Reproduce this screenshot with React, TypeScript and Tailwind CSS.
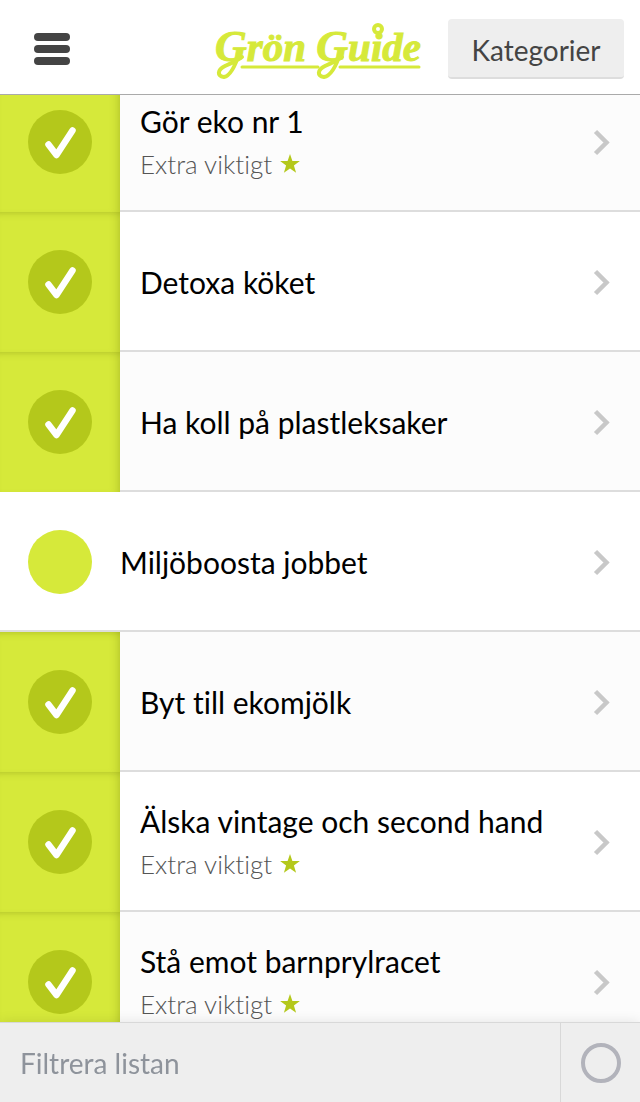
import { useState } from "react";

const initialTips = [
  { id: 1, title: "Gör eko nr 1", important: true, done: true },
  { id: 2, title: "Detoxa köket", important: false, done: true },
  { id: 3, title: "Ha koll på plastleksaker", important: false, done: true },
  { id: 4, title: "Miljöboosta jobbet", important: false, done: false },
  { id: 5, title: "Byt till ekomjölk", important: false, done: true },
  { id: 6, title: "Älska vintage och second hand", important: true, done: true },
  { id: 7, title: "Stå emot barnprylracet", important: true, done: true },
];

function Logo() {
  return (
    <svg
      width="212"
      height="64"
      viewBox="0 0 212 64"
      fill="none"
      stroke="#d6e93a"
      strokeLinecap="round"
      role="img"
      aria-label="Grön Guide"
    >
      <text
        x="3"
        y="42"
        fill="#d6e93a"
        strokeWidth="1"
        className="font-['Liberation_Serif',serif] text-[41px] font-bold italic"
      >
        <tspan className="text-[44px]">G</tspan>rön <tspan className="text-[44px]">G</tspan>uide
      </text>
      {/* Swashes below both capitals */}
      <path d="M28 32C24 45 19 57 12 58C5 57 5 51 13 47C19 44 25 42 30 38" strokeWidth="4" />
      <path d="M129 32C125 45 119 57 112 58C105 57 105 51 113 47C119 44 125 42 130 38" strokeWidth="4" />
      <path d="M30 48H106M128 48H207" strokeWidth="3" />
      <circle cx="166" cy="10" r="4" fill="#fff" strokeWidth="4" />
    </svg>
  );
}

function Header() {
  return (
    <header className="flex h-[95px] shrink-0 items-center border-b border-[#aaa] bg-white pr-4 pl-[34px]">
      <button type="button" aria-label="Meny" className="flex w-9 flex-col gap-1 pt-1">
        <span className="h-2 w-full rounded-full bg-[#444]" />
        <span className="h-2 w-full rounded-full bg-[#444]" />
        <span className="h-2 w-full rounded-full bg-[#444]" />
      </button>
      <a href="#" className="mt-2 mr-6 ml-auto">
        <Logo />
      </a>
      <button
        type="button"
        className="mt-1 h-[60px] w-44 rounded border-b-2 border-[#ddd] bg-[#eee] pt-1 text-[28px] text-[#444]"
      >
        Kategorier
      </button>
    </header>
  );
}

type Tip = (typeof initialTips)[number];

function TipRow({ tip, onToggle }: { tip: Tip; onToggle: () => void }) {
  return (
    <li className="flex h-[140px] bg-white odd:bg-[#fcfcfc]">
      <div
        className={
          tip.done
            ? "grid w-[120px] shrink-0 place-items-center bg-[#d6e93a] shadow-[inset_-8px_0_8px_-6px_rgba(90,100,0,0.25),inset_0_7px_7px_-6px_rgba(90,100,0,0.25)]"
            : "grid w-[120px] shrink-0 place-items-center border-b-2 border-[#ddd] pt-0.5"
        }
      >
        <input
          type="checkbox"
          checked={tip.done}
          onChange={onToggle}
          aria-label={tip.title}
          className="col-start-1 row-start-1 size-16 appearance-none rounded-full bg-[#d6e93a] checked:bg-[#b4c81b]"
        />
        {tip.done && (
          <svg
            viewBox="0 0 64 64"
            className="pointer-events-none col-start-1 row-start-1 size-16"
            fill="none"
            stroke="#fff"
            strokeWidth="6.5"
            strokeLinecap="round"
            strokeLinejoin="round"
          >
            <path d="M20.500 34.500L28.500 45L44.500 20.500" />
          </svg>
        )}
      </div>
      <a
        href="#"
        className={
          tip.done
            ? "flex min-w-0 flex-1 items-center border-b-2 border-[#ddd] pt-0.5 pr-7 pl-5"
            : "flex min-w-0 flex-1 items-center border-b-2 border-[#ddd] pt-0.5 pr-7"
        }
      >
        <span className="flex min-w-0 flex-1 flex-col">
          <span className="truncate text-[30px] leading-[44px] text-black">{tip.title}</span>
          {tip.important && (
            <span className="flex items-center gap-1.5 text-[26px] leading-[42px] font-light text-[#555]">
              Extra viktigt
              <svg width="24" height="24" viewBox="0 0 24 24" fill="#b4c81b">
                <path d="M12 2l2.400 7.100h7.500l-6 4.500 2.200 7.200-6.100-4.400-6.100 4.400 2.200-7.200-6-4.500h7.500z" />
              </svg>
            </span>
          )}
        </span>
        <svg
          width="20"
          height="28"
          viewBox="0 0 20 28"
          fill="none"
          stroke="#c8c8c8"
          strokeWidth="4.500"
        >
          <path d="M3.500 3.500L14.500 14.500L3.500 25.500" />
        </svg>
      </a>
    </li>
  );
}

export default function App() {
  const [tips, setTips] = useState(initialTips);

  const toggle = (id: number) =>
    setTips(tips.map((tip) => (tip.id === id ? { ...tip, done: !tip.done } : tip)));

  return (
    <div className="flex h-screen flex-col bg-white font-['Lato',sans-serif] [font-variant-ligatures:none]">
      <Header />
      <main className="min-h-0 flex-1 overflow-y-auto [scrollbar-width:none]">
        <ul className="-mt-[23px]">
          {tips.map((tip) => (
            <TipRow key={tip.id} tip={tip} onToggle={() => toggle(tip.id)} />
          ))}
        </ul>
      </main>
      <footer className="z-10 flex h-20 shrink-0 border-t border-[#d8d8d8] bg-[#eee] shadow-[0_0_12px_rgba(0,0,0,0.1)]">
        <input
          type="text"
          placeholder="Filtrera listan"
          aria-label="Filtrera listan"
          className="min-w-0 flex-1 px-5 text-[28px] text-[#444] outline-none placeholder:text-[#8e939b]"
        />
        <label className="grid w-20 place-items-center border-l border-[#d8d8d8]">
          <input
            type="checkbox"
            aria-label="Visa bara klara"
            className="size-10 appearance-none rounded-full border-4 border-[#b2b3bb]"
          />
        </label>
      </footer>
    </div>
  );
}
